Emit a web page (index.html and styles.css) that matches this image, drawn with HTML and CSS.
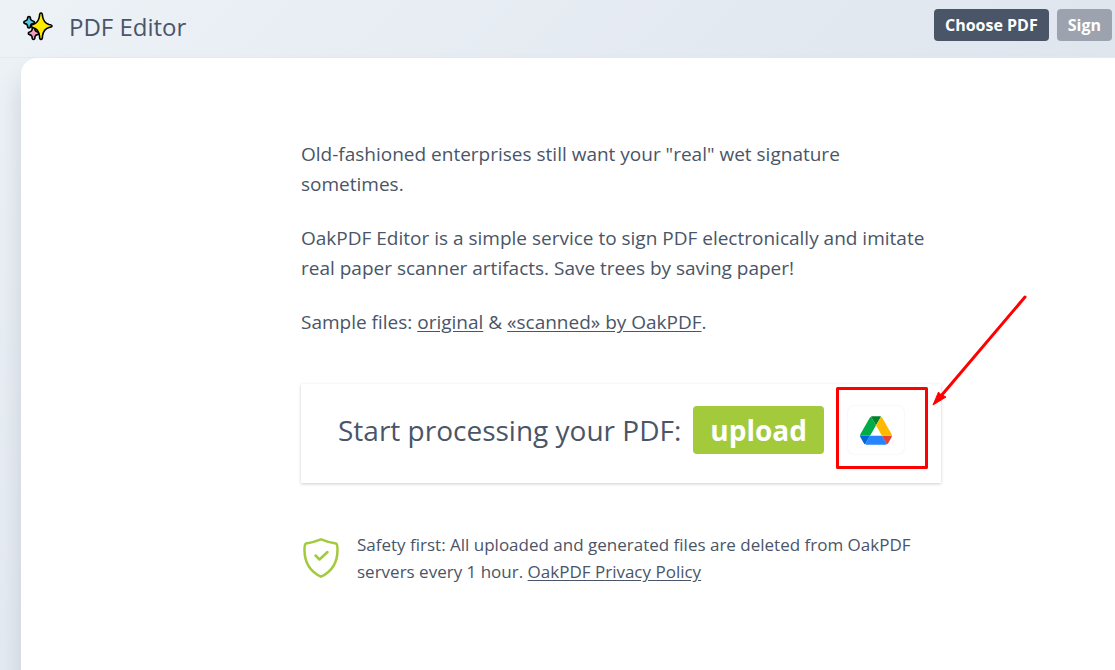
FILE: index.html
```html
<!DOCTYPE html>
<html lang="en">
<head>
  <meta charset="UTF-8" />
  <meta name="viewport" content="width=device-width, initial-scale=1.0"/>
  <title>PDF Editor</title>
  <link rel="stylesheet" href="styles.css">
</head>
<body>
  <header class="header">
    <svg class="logo" viewBox="0 0 30 30" aria-hidden="true">
      <g stroke="#000" stroke-width="1.600" stroke-linejoin="round">
        <path fill="#55c8ea" d="M6 4.500 Q7.500 4.500 7.500 7 Q8 8.500 10 9 Q11.500 9.200 11.500 10.300 Q11.500 11.500 10 11.600 Q8 12 7.500 13.500 Q7.500 16 6 16 Q4.500 16 4.500 13.500 Q4 12 2 11.600 Q.8 11.500 .8 10.300 Q.8 9.200 2 9 Q4 8.500 4.500 7 Q4.500 4.500 6 4.500Z"/>
        <path fill="#f59ac0" d="M10.500 15.500 Q12 15.500 12 18 Q12.500 19.500 14.500 20 Q16 20.200 16 21.300 Q16 22.500 14.500 22.600 Q12.500 23 12 24.500 Q12 27.500 10.500 27.500 Q9 27.500 9 24.500 Q8.500 23 6.500 22.600 Q5.300 22.500 5.300 21.300 Q5.300 20.200 6.500 20 Q8.500 19.500 9 18 Q9 15.500 10.500 15.500Z"/>
        <path fill="#ffec00" d="M18 1 Q19.500 1 19.500 4 Q20.500 11 26 12.500 Q29 13 29 14 Q29 15 26 15.500 Q20.500 17 19.500 24 Q19.500 27.500 18 27.500 Q16.500 27.500 16.500 24 Q15.500 17 10 15.500 Q8 15 8 14 Q8 13 10 12.500 Q15.500 11 16.500 4 Q16.500 1 18 1Z"/>
      </g>
    </svg>
    <h1 class="title">PDF Editor</h1>
    <div class="actions">
      <button class="btn" type="button">Choose PDF</button>
      <button class="btn btn-muted" type="button">Sign</button>
    </div>
  </header>

  <main class="panel">
    <div class="content">
      <p>Old-fashioned enterprises still want your "real" wet signature sometimes.</p>
      <p>OakPDF Editor is a simple service to sign PDF electronically and imitate real paper scanner artifacts. Save trees by saving paper!</p>
      <p>Sample files: <a href="#">original</a> &amp; <a href="#">«scanned» by OakPDF</a>.</p>

      <div class="card">
        <span class="card-text">Start processing your PDF:</span>
        <button class="upload" type="button">upload</button>
        <button class="drive" type="button" aria-label="Google Drive">
          <svg viewBox="0 0 87.300 78" width="32" height="29">
            <path fill="#0066da" d="M6.600 66.850l3.850 6.650c.8 1.400 1.950 2.500 3.300 3.300l13.750-23.800H0c0 1.550.4 3.100 1.200 4.500z"/>
            <path fill="#00ac47" d="M43.650 25L29.900 1.200c-1.350.8-2.500 1.900-3.300 3.300l-25.400 44A9 9 0 0 0 0 53h27.500z"/>
            <path fill="#ea4335" d="M73.550 76.800c1.350-.8 2.500-1.900 3.300-3.300l1.600-2.750L86.100 57.500c.8-1.400 1.200-2.950 1.200-4.500H59.800l5.850 11.500z"/>
            <path fill="#00832d" d="M43.650 25L57.400 1.200C56.050.4 54.500 0 52.900 0H34.400c-1.600 0-3.150.45-4.500 1.200z"/>
            <path fill="#2684fc" d="M59.800 53H27.500L13.750 76.800c1.350.8 2.900 1.200 4.500 1.200h50.800c1.600 0 3.150-.45 4.500-1.200z"/>
            <path fill="#ffba00" d="M73.400 26.500l-12.700-22c-.8-1.400-1.950-2.500-3.300-3.300L43.650 25 59.800 53h27.450c0-1.550-.4-3.100-1.200-4.500z"/>
          </svg>
        </button>
        <svg class="marker" viewBox="0 0 194 176" aria-hidden="true">
          <rect x="2.500" y="93.500" width="89" height="79" fill="none" stroke="#f00" stroke-width="3" stroke-linejoin="round"/>
          <path d="M190 2 L106 101" stroke="#f00" stroke-width="3" stroke-linecap="round"/>
          <path d="M98 110 L103.500 97 L105 99 L111 102 Z" fill="#f00" stroke="#f00"/>
        </svg>
      </div>

      <div class="safety">
        <svg class="shield" viewBox="0 0 36 40" fill="none" stroke="#a3ca3b" stroke-width="2.500" stroke-linecap="round" stroke-linejoin="round" aria-hidden="true">
          <path d="M3 5.500 Q10 4.500 18 1.300 Q26 4.500 33 5.500 Q34.500 6 34.500 12 C34.500 25 28 34 18 38.700 C8 34 1.500 25 1.500 12 Q1.500 6 3 5.500Z"/>
          <path d="M12.500 17.500 L16.500 21.500 L24.500 14"/>
        </svg>
        <div class="safety-text">Safety first: All uploaded and generated files are deleted from OakPDF servers every 1 hour. <a href="#">OakPDF Privacy Policy</a></div>
      </div>
    </div>
  </main>
</body>
</html>
```
FILE: styles.css
```css
* {
  box-sizing: border-box;
}

body {
  margin: 0;
  min-height: 100vh;
  display: flex;
  flex-direction: column;
  overflow-x: hidden;
  background: linear-gradient(135deg, #edf2f7, #e2e8f0 50%, #dae1ea);
  font-family: "Segoe UI", "Open Sans", "Noto Sans", sans-serif;
  color: #4a5568;
}

a {
  color: inherit;
  text-underline-offset: 2px;
}

button {
  border: 0;
  font-family: inherit;
  cursor: pointer;
}

.header {
  display: flex;
  align-items: center;
  height: 58px;
  padding: 0 3px 4px 23px;
  border-bottom: 1px solid #e6eaf0;
}

.logo {
  width: 30px;
  height: 30px;
  margin-right: 16px;
}

.title {
  margin: 0;
  font-size: 24px;
  font-weight: 500;
}

.actions {
  display: flex;
  gap: 8px;
  margin-left: auto;
  margin-bottom: 4px;
}

.btn {
  height: 32px;
  padding: 0 11px;
  border-radius: 4px;
  background: #4a5568;
  color: #fff;
  font-size: 16px;
  font-weight: 700;
}

.btn-muted {
  background: #9ca3af;
}

.panel {
  flex: 1;
  margin-left: 21px;
  padding: 81px 24px 48px 280px;
  border-top-left-radius: 16px;
  background: #fff;
  box-shadow: 0 20px 24px rgba(74, 85, 104, 0.2);
}

.content {
  max-width: 640px;
  font-size: 19px;
  line-height: 30px;
}

.content p {
  margin: 0 0 24px;
}

.card {
  position: relative;
  display: flex;
  align-items: center;
  margin-top: 47px;
  padding: 22px 37px 29px;
  box-shadow: 0 1px 3px rgba(0, 0, 0, 0.2);
}

.card-text {
  font-size: 28px;
  line-height: 48px;
  white-space: nowrap;
}

.upload {
  height: 48px;
  margin-left: 12px;
  padding: 0 17px;
  border-radius: 4px;
  background: #a3ca3b;
  color: #fff;
  font-size: 28px;
  font-weight: 700;
}

.drive {
  display: flex;
  align-items: center;
  justify-content: center;
  width: 56px;
  height: 48px;
  margin-left: 24px;
  padding: 0;
  border-radius: 6px;
  background: #fff;
  box-shadow: 0 0 2px rgba(0, 0, 0, 0.1);
}

.marker {
  position: absolute;
  left: 534px;
  top: -89px;
  width: 194px;
  height: 176px;
  pointer-events: none;
}

.safety {
  display: flex;
  gap: 18px;
  margin-top: 48px;
  padding-left: 2px;
}

.shield {
  flex: none;
  width: 36px;
  height: 40px;
  margin-top: 7px;
}

.safety-text {
  font-size: 17px;
  line-height: 27px;
}
```
